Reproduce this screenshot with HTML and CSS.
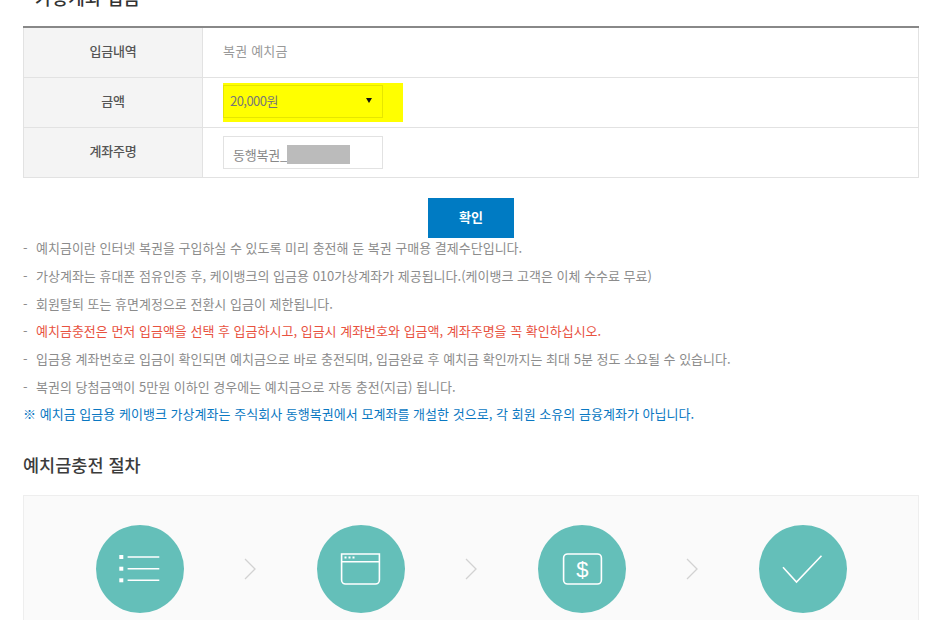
FILE: index.html
```html
<!DOCTYPE html>
<html lang="ko">
<head>
    <meta charset="UTF-8">
    <meta name="viewport" content="width=device-width, initial-scale=1.0">
    <title>가상계좌 입금</title>
    <link rel="stylesheet" href="styles.css">
</head>
<body>
    <div class="container">
        <h2 class="page-title">가상계좌 입금</h2>

        <table class="form-table">
            <tr>
                <th>입금내역</th>
                <td class="plain">복권 예치금</td>
            </tr>
            <tr>
                <th>금액</th>
                <td>
                    <div class="highlight">
                        <div class="select-box">
                            <span>20,000원</span>
                            <span class="select-arrow"></span>
                        </div>
                    </div>
                </td>
            </tr>
            <tr>
                <th>계좌주명</th>
                <td>
                    <div class="input-box">동행복권_<span class="masked"></span></div>
                </td>
            </tr>
        </table>

        <div class="btn-row">
            <button type="button" class="btn">확인</button>
        </div>

        <ul class="notes">
            <li>예치금이란 인터넷 복권을 구입하실 수 있도록 미리 충전해 둔 복권 구매용 결제수단입니다.</li>
            <li>가상계좌는 휴대폰 점유인증 후, 케이뱅크의 입금용 010가상계좌가 제공됩니다.(케이뱅크 고객은 이체 수수료 무료)</li>
            <li>회원탈퇴 또는 휴면계정으로 전환시 입금이 제한됩니다.</li>
            <li class="warn">예치금충전은 먼저 입금액을 선택 후 입금하시고, 입금시 계좌번호와 입금액, 계좌주명을 꼭 확인하십시오.</li>
            <li>입금용 계좌번호로 입금이 확인되면 예치금으로 바로 충전되며, 입금완료 후 예치금 확인까지는 최대 5분 정도 소요될 수 있습니다.</li>
            <li>복권의 당첨금액이 5만원 이하인 경우에는 예치금으로 자동 충전(지급) 됩니다.</li>
        </ul>
        <p class="notice">※ 예치금 입금용 케이뱅크 가상계좌는 주식회사 동행복권에서 모계좌를 개설한 것으로, 각 회원 소유의 금융계좌가 아닙니다.</p>

        <h3 class="section-title">예치금충전 절차</h3>

        <div class="steps">
            <div class="step">
                <svg viewBox="0 0 88 88" width="88" height="88">
                    <g fill="#fff">
                        <rect x="23.300" y="30" width="4" height="4"/>
                        <rect x="23.300" y="41.700" width="4" height="4"/>
                        <rect x="23.300" y="53.300" width="4" height="4"/>
                    </g>
                    <g stroke="#fff" stroke-width="1.6" fill="none">
                        <path d="M31.600 32h31.700M31.600 43.700h31.700M31.600 55.300h31.700"/>
                    </g>
                </svg>
            </div>
            <svg class="chevron" viewBox="0 0 12 22" width="12" height="22"><path d="M1 1l10 10L1 21" fill="none" stroke="#d2d2d2" stroke-width="1.3"/></svg>
            <div class="step">
                <svg viewBox="0 0 88 88" width="88" height="88">
                    <g stroke="#fff" stroke-width="1.6" fill="none">
                        <path d="M24.600 29h37.800v26a4 4 0 0 1-4 4h-29.800a4 4 0 0 1-4-4z"/>
                        <path d="M24.600 36.700h37.800"/>
                    </g>
                    <g fill="#fff">
                        <rect x="27.500" y="31.500" width="2" height="2"/>
                        <rect x="31.500" y="31.500" width="2" height="2"/>
                        <rect x="35.500" y="31.500" width="2" height="2"/>
                    </g>
                </svg>
            </div>
            <svg class="chevron" viewBox="0 0 12 22" width="12" height="22"><path d="M1 1l10 10L1 21" fill="none" stroke="#d2d2d2" stroke-width="1.3"/></svg>
            <div class="step">
                <svg viewBox="0 0 88 88" width="88" height="88">
                    <rect x="25.600" y="29" width="37.800" height="30" rx="4" fill="none" stroke="#fff" stroke-width="1.600"/>
                    <text x="44.400" y="51.500" class="dollar">$</text>
                </svg>
            </div>
            <svg class="chevron" viewBox="0 0 12 22" width="12" height="22"><path d="M1 1l10 10L1 21" fill="none" stroke="#d2d2d2" stroke-width="1.3"/></svg>
            <div class="step">
                <svg viewBox="0 0 88 88" width="88" height="88">
                    <path d="M24 42.300L37.500 57L62.500 30.700" fill="none" stroke="#fff" stroke-width="1.600"/>
                </svg>
            </div>
        </div>
    </div>
</body>
</html>
```

FILE: styles.css
```css
* {
    margin: 0;
    padding: 0;
    box-sizing: border-box;
}

html {
    overflow: hidden;
}

body {
    font-family: "Noto Sans CJK KR", "Noto Sans", sans-serif;
    background: #fff;
    color: #777;
    font-size: 13px;
}

.container {
    width: 896px;
    margin-left: 23px;
}

.page-title {
    font-size: 18px;
    font-weight: 500;
    color: #333;
    line-height: 24px;
    height: 26px;
    margin-top: -15px;
    margin-bottom: 15px;
    padding-left: 12px;
    letter-spacing: 0.1px;
}

.form-table {
    width: 100%;
    border-collapse: collapse;
    table-layout: fixed;
    border-top: 2px solid #888;
}

.form-table th,
.form-table td {
    border: 1px solid #e2e2e2;
    height: 50px;
    vertical-align: middle;
}

.form-table th {
    width: 179px;
    padding-bottom: 4px;
    background: #f4f4f4;
    color: #555;
    font-weight: 500;
    font-size: 13px;
    letter-spacing: -0.15px;
}

.form-table td {
    padding-left: 20px;
    color: #999;
    font-size: 13px;
}

.form-table .plain {
    padding-bottom: 4px;
    letter-spacing: 0.2px;
}

.highlight {
    width: 180px;
    height: 39px;
    padding-top: 2px;
    background: #ffff00;
}

.select-box {
    display: flex;
    align-items: center;
    justify-content: space-between;
    width: 160px;
    height: 33px;
    padding: 0 8px 2px 6px;
    border: 1px solid #e6e600;
    color: #777;
    letter-spacing: -0.55px;
}

.select-arrow {
    width: 0;
    height: 0;
    margin-right: 2px;
    border-left: 3.500px solid transparent;
    border-right: 3.500px solid transparent;
    border-top: 5px solid #111;
}

.input-box {
    display: flex;
    align-items: center;
    width: 160px;
    height: 33px;
    margin-top: 1px;
    padding: 3px 0 0 9px;
    border: 1px solid #e2e2e2;
    color: #888;
    letter-spacing: -0.2px;
}

.masked {
    width: 63px;
    height: 19px;
    background: #bbb;
}

.btn-row {
    display: flex;
    justify-content: center;
    margin-top: 20px;
}

.btn {
    width: 86px;
    height: 40px;
    padding-bottom: 2px;
    border: none;
    background: #007bc3;
    color: #fff;
    font-family: inherit;
    font-size: 13px;
    font-weight: 700;
}

.notes {
    list-style: none;
}

.notes li {
    line-height: 27.700px;
    padding-left: 13px;
    position: relative;
    color: #8c8c8c;
}

.notes li::before {
    content: "-";
    position: absolute;
    left: 0;
    color: #8c8c8c;
}

.notes li:first-child {
    margin-top: -3.400px;
}

.notes .warn {
    color: #e8523f;
}

.notice {
    line-height: 27.700px;
    letter-spacing: 0.03px;
    color: #0a78c2;
}

.section-title {
    margin-top: 25px;
    font-size: 17.500px;
    font-weight: 500;
    line-height: 24px;
    color: #3c3c3c;
}

.steps {
    display: flex;
    align-items: center;
    gap: 60.500px;
    margin-top: 18px;
    height: 160px;
    padding: 29px 0 41px 71.700px;
    background: #fafafa;
    border: 1px solid #eee;
}

.step {
    width: 88px;
    height: 88px;
    flex: none;
    border-radius: 50%;
    background: #64bfb9;
}

.step svg {
    display: block;
}

.chevron {
    flex: none;
}

.dollar {
    font-family: "Liberation Sans", sans-serif;
    font-size: 22px;
    fill: #fff;
    text-anchor: middle;
}
```
